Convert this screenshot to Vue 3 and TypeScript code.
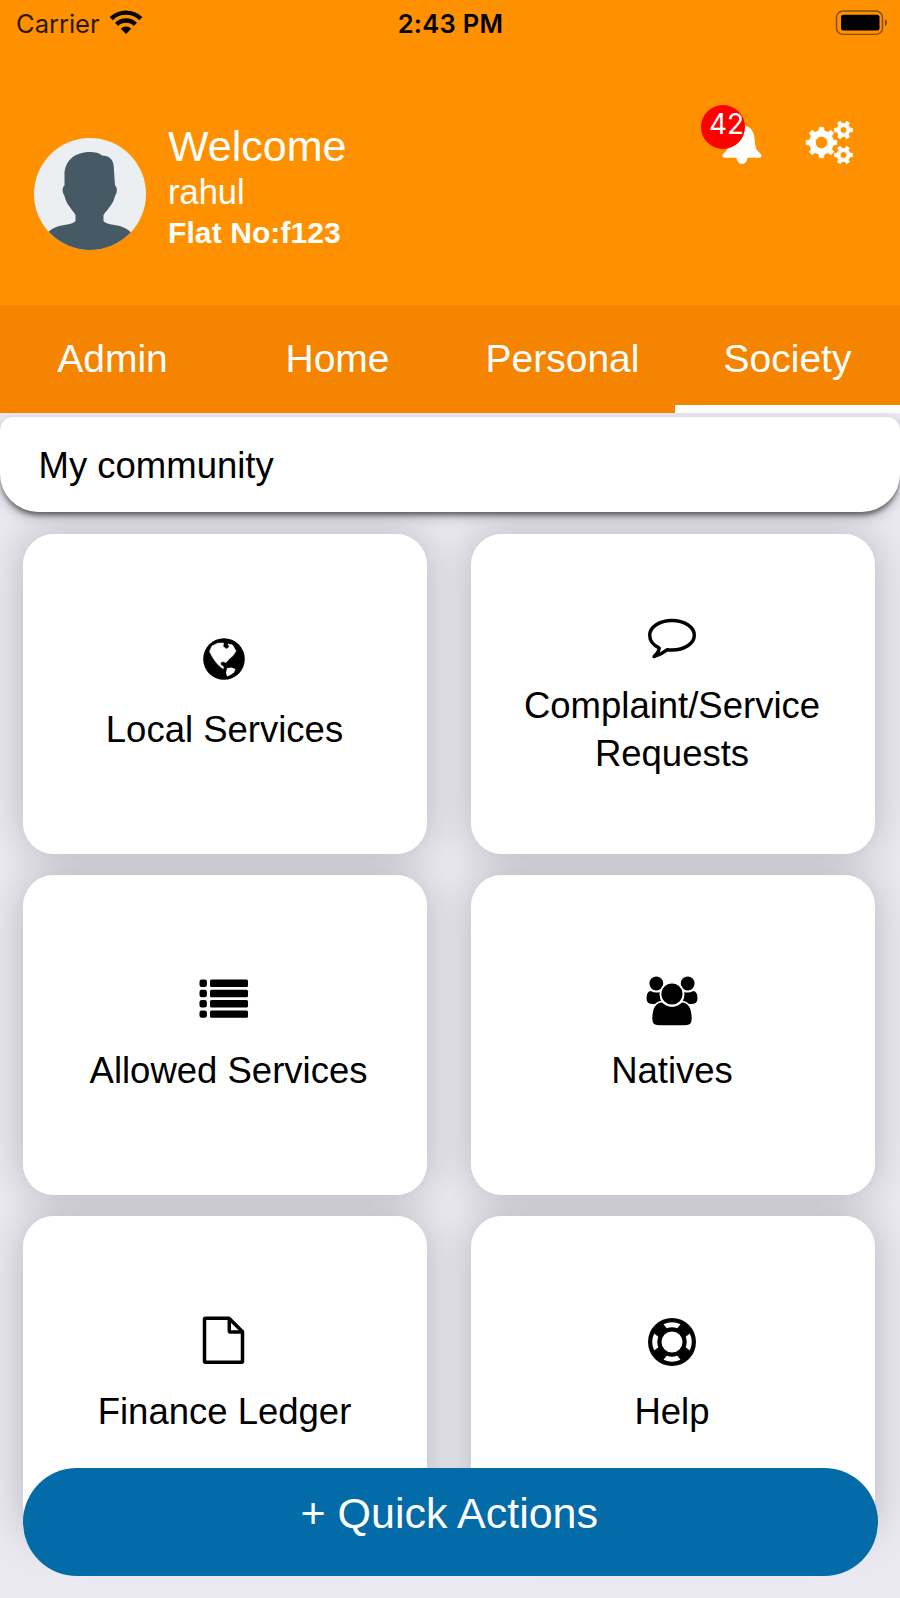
<script setup lang="ts">
interface Tile {
  icon: string
  lines: string[]
}

const tabs: string[] = ['Admin', 'Home', 'Personal', 'Society']
const activeTab = 'Society'

const tiles: Tile[] = [
  { icon: 'globe', lines: ['Local Services'] },
  { icon: 'comment', lines: ['Complaint/Service', 'Requests'] },
  { icon: 'list', lines: ['Allowed Services'] },
  { icon: 'users', lines: ['Natives'] },
  { icon: 'file', lines: ['Finance Ledger'] },
  { icon: 'ring', lines: ['Help'] },
]

// Outline of a cog: trapezoid teeth around a body, with a round hole in the middle.
function gear(cx: number, cy: number, outer: number, body: number, hole: number, teeth: number): string {
  const step = (Math.PI * 2) / teeth
  const pts: string[] = []
  const add = (r: number, a: number) => pts.push(`${(cx + r * Math.cos(a)).toFixed(2)} ${(cy + r * Math.sin(a)).toFixed(2)}`)
  for (let i = 0; i < teeth; i++) {
    const a = i * step
    add(body, a - step * 0.27)
    add(outer, a - step * 0.17)
    add(outer, a + step * 0.17)
    add(body, a + step * 0.27)
  }
  return `M${pts.join('L')}ZM${cx - hole} ${cy}a${hole} ${hole} 0 1 0 ${hole * 2} 0a${hole} ${hole} 0 1 0 ${-hole * 2} 0Z`
}

const gears: string = [
  gear(16.5, 21.5, 15.4, 12, 6.2, 8),
  gear(38.5, 9, 9.2, 6.7, 3.4, 6),
  gear(38.5, 34, 9.2, 6.7, 3.4, 6),
].join('')
</script>

<template>
  <div class="screen">
    <header class="top">
      <div class="status">
        <div class="carrier">
          <span>Carrier</span>
          <svg class="wifi" width="34" height="26" viewBox="0 0 34 26">
            <g fill="none" stroke="#000" stroke-width="4.4">
              <path d="M2.2 9.6a21.3 21.3 0 0 1 29.6 0" />
              <path d="M7.6 15.4a13.4 13.4 0 0 1 18.8 0" />
            </g>
            <path d="M17 25l-5.2-5.3a7.4 7.4 0 0 1 10.4 0z" />
          </svg>
        </div>
        <div class="clock">2:43 PM</div>
        <svg class="battery" width="54" height="26" viewBox="0 0 54 26">
          <rect x="1.500" y="1" width="46" height="23.4" rx="6.5" fill="none" stroke="#5c3500" stroke-width="1.4" opacity=".75" />
          <rect x="6" y="4.8" width="38.500" height="15.600" rx="2.5" />
          <path d="M50 9q4.2 3.7 0 7.4z" fill="#704000" />
        </svg>
      </div>
      <div class="profile">
        <svg class="avatar" width="114" height="114" viewBox="0 0 114 114">
          <defs><clipPath id="face"><circle cx="57" cy="57" r="56" /></clipPath></defs>
          <g clip-path="url(#face)">
            <rect width="114" height="114" fill="#eceff1" />
            <path fill="#455a64" d="M57 15c5 0 9 1 12 3.400c7 .6 11 3 11.700 10.600l1.300 19.500c2.600 2 2.400 7 0 10.500c-1.500 8-7.500 13-11.500 19v6c2 3 9 3.600 14 4.500c8 2 13.500 5 14.500 10V120H14V98.500c1-5 6-8 14.500-10c5-.9 12-1.500 14-4.500V78c-3.500-6-9.500-11-11-19c-2.400-3.500-2.600-8.500 0-10.500V38c0-14 10-23 25.500-23z" />
          </g>
        </svg>
        <div class="who">
          <div class="welcome">Welcome</div>
          <div class="name">rahul</div>
          <div class="flat">Flat No:f123</div>
        </div>
        <div class="bell">
          <svg width="40" height="42" viewBox="0 0 40 42">
            <path fill="#fff" d="M20 .5c2 0 3.200 1 3.600 2.500c6 1.500 8.600 6.500 9 13c.4 8 2 11.500 5.700 14.500c2 1.600 1.600 4-.8 4.300H25.500c-.5 4-2.500 6.200-5.500 6.200s-5-2.200-5.500-6.200H2.500c-2.400-.3-2.800-2.700-.8-4.300C5.400 27.500 7 24 7.400 16c.4-6.500 3-11.500 9-13C16.800 1.500 18 .5 20 .5z" />
          </svg>
          <span class="badge">42</span>
        </div>
        <svg class="gears" width="49" height="44" viewBox="0 0 49 44">
          <path :d="gears" fill="#fff" fill-rule="evenodd" stroke="#fff" stroke-width=".8" stroke-linejoin="round" />
        </svg>
      </div>
    </header>

    <nav class="tabs">
      <div v-for="tab in tabs" :key="tab" class="tab" :class="{ active: tab === activeTab }">{{ tab }}</div>
    </nav>

    <div class="section">My community</div>

    <main class="grid">
      <div v-for="tile in tiles" :key="tile.icon" class="tile" :class="tile.icon">
        <svg class="icon" width="54" height="50" viewBox="0 0 54 50">
          <template v-if="tile.icon === 'globe'">
            <circle cx="27" cy="25" r="20.800" />
            <path fill="#fff" stroke="#fff" stroke-width=".6" stroke-linejoin="round" d="M12.500 17.500L15 12l5.500-2.700l6-.3l-.5 3.500l3.500 2.500l3-2l-1.500-3l4.500 1l3.500 6l-3 4.500l-4 3.500l-3 3.500l-3-1l-2.500 1l.5 3l2 .5l.5 2.500l-2-.8l-4.500-4.200l-4-5.500z" />
            <path fill="#fff" d="M30 34.200l4-.7l4.500 1.500l-1.500 3.500l-3.500 2.500l-3.500 1.500l-1-4z" />
          </template>
          <path v-else-if="tile.icon === 'comment'" fill="none" stroke="#000" stroke-width="3.400" stroke-linejoin="round" d="M27 6.500c12.300 0 22.300 6.400 22.300 14.700S39.300 36 27 36q-2.500 0-5-.2Q16.500 40.500 9 42.500q4.800-4 5.200-8.500C8.300 31 4.700 27 4.700 21.200c0-8.300 9.900-14.700 22.300-14.700z" />
          <g v-else-if="tile.icon === 'list'">
            <g v-for="n in 4" :key="n">
              <rect x="2.500" :y="n * 10.300 - 6.800" width="7.400" height="7.400" rx="2.200" />
              <rect x="13" :y="n * 10.300 - 6.800" width="38" height="7.400" rx="1.500" />
            </g>
          </g>
          <g v-else-if="tile.icon === 'users'">
            <circle cx="11.300" cy="7.500" r="6.900" />
            <circle cx="42.700" cy="7.500" r="6.900" />
            <path d="M5.500 15q5 2.500 9.500 1q-1 8 4 12h-11q-6.500 0-6.500-5.500q0-7 4-7.500z" />
            <path d="M48.500 15q-5 2.500-9.500 1q1 8-4 12h11q6.500 0 6.500-5.500q0-7-4-7.500z" />
            <path stroke="#fff" stroke-width="1.600" d="M17 25.500q4.500 4.500 10 4.500T37 25.500q10.500 1 10.500 17.500q0 7-7 7H13.500q-7 0-7-7Q6.500 26.500 17 25.500z" />
            <circle cx="27" cy="18" r="11.500" stroke="#fff" stroke-width="1.800" />
          </g>
          <g v-else-if="tile.icon === 'file'" fill="none" stroke="#000" stroke-width="3.500" stroke-linejoin="round">
            <path d="M8.500 2.300h23.500l13.500 13.500v29.500q0 1-1 1H8.500q-1 0-1-1v-42q0-1 1-1z" />
            <path d="M32.300 2.300v12.400q0 1.400 1.400 1.400h11.800" />
          </g>
          <g v-else>
            <path fill-rule="evenodd" d="M27 1a24 24 0 1 0 0 48a24 24 0 1 0 0-48zM27 14.500a10.500 10.500 0 1 1 0 21a10.500 10.500 0 1 1 0-21z" />
            <path v-for="n in 4" :key="n" fill="#fff" :transform="`rotate(${n * 90} 27 25)`" d="M18.500 7.200a20 20 0 0 1 17 0l-3.200 4.100a15 15 0 0 0-10.600 0z" />
          </g>
        </svg>
        <div class="label"><div v-for="line in tile.lines" :key="line">{{ line }}</div></div>
      </div>
    </main>

    <button class="quick" type="button">+ Quick Actions</button>
  </div>
</template>

<style>
body {
  margin: 0;
}
</style>

<style scoped>
.screen {
  position: relative;
  width: 900px;
  height: 1598px;
  overflow: hidden;
  background: #eae9f1;
  font-family: "Liberation Sans", Arial, Helvetica, sans-serif;
  color: #000;
}
.top {
  height: 305px;
  background: #ff9100;
}
.status {
  height: 48px;
  display: grid;
  grid-template-columns: 1fr auto 1fr;
  padding: 0 11px 0 16px;
  font: 25.500px/48px Inter, sans-serif;
}
.carrier {
  display: flex;
  gap: 9px;
  color: #2b1800;
}
.wifi {
  margin-top: 9px;
}
.clock {
  margin-left: -4px;
  font-weight: 600;
  letter-spacing: 0.300px;
}
.battery {
  justify-self: end;
  margin-top: 10px;
}
.profile {
  display: flex;
  align-items: flex-start;
  padding: 57px 46px 0 33px;
  color: #fff;
}
.avatar {
  margin-top: 32px;
}
.who {
  flex: 1;
  margin: 16px 0 0 21px;
  white-space: nowrap;
}
.welcome {
  font-size: 43px;
  line-height: 50px;
}
.name {
  font-size: 34.500px;
  line-height: 42px;
}
.flat {
  font-size: 30px;
  font-weight: 700;
  line-height: 40px;
  letter-spacing: 0.100px;
}
.bell {
  position: relative;
  margin: 18px 43px 0 0;
}
.bell svg {
  display: block;
}
.badge {
  position: absolute;
  left: -21px;
  top: -18px;
  width: 44px;
  height: 44px;
  box-sizing: border-box;
  padding-left: 8px;
  border-radius: 50%;
  background: #f00;
  font: 28px/39px Inter, sans-serif;
}
.gears {
  margin-top: 16px;
}
.tabs {
  display: grid;
  grid-template-columns: repeat(4, 1fr);
  height: 107.500px;
  background: #f58400;
  color: #fff;
  font-size: 39px;
  line-height: 107px;
  text-align: center;
}
.tab {
  box-sizing: border-box;
  height: 107.500px;
}
.active {
  border-bottom: 8px solid #fff;
}
.section {
  position: relative;
  z-index: 0;
  height: 95px;
  margin-top: 4.500px;
  padding-left: 38.500px;
  border-radius: 13px 13px 38px 38px;
  background: #fff;
  box-shadow: 0 4px 5px -1px rgba(0, 0, 0, 0.500), 0 5px 14px -1px rgba(0, 0, 0, 0.250);
  font-size: 36.500px;
  line-height: 97px;
}
.grid {
  position: relative;
  z-index: 0;
  display: grid;
  grid-template-columns: 404px 404px;
  grid-auto-rows: 319.500px;
  gap: 21.500px 43.500px;
  padding: 22px 0 0 23px;
  clip-path: inset(0 0 -300px 0);
}
.tile {
  position: relative;
  display: flex;
  flex-direction: column;
  align-items: center;
  justify-content: center;
  border-radius: 31px;
  background: #fff;
}
.tile::before {
  content: "";
  position: absolute;
  inset: 0;
  z-index: -1;
  border-radius: 31px;
  box-shadow: 0 0 42px rgba(0, 0, 0, 0.220);
}
.icon {
  display: block;
  margin: 1px 2px 22px 0;
  flex: none;
}
.comment .icon {
  margin: 5px 1px 18px 0;
}
.list .icon {
  margin: 2px 2px 21px 0;
}
.users .icon,
.ring .icon {
  margin: 2px 1px 21px 0;
}
.label {
  padding-right: 1px;
  font-size: 36.500px;
  line-height: 48px;
  text-align: center;
}
.list .label {
  padding: 0 0 0 7px;
}
.quick {
  position: absolute;
  left: 23px;
  bottom: 22.500px;
  width: 854.500px;
  height: 108px;
  padding: 0 2px 18px 0;
  border: 0;
  border-radius: 54px;
  background: #036ba7;
  color: #fff;
  font: 43px/90px "Liberation Sans", Arial, sans-serif;
}
</style>
